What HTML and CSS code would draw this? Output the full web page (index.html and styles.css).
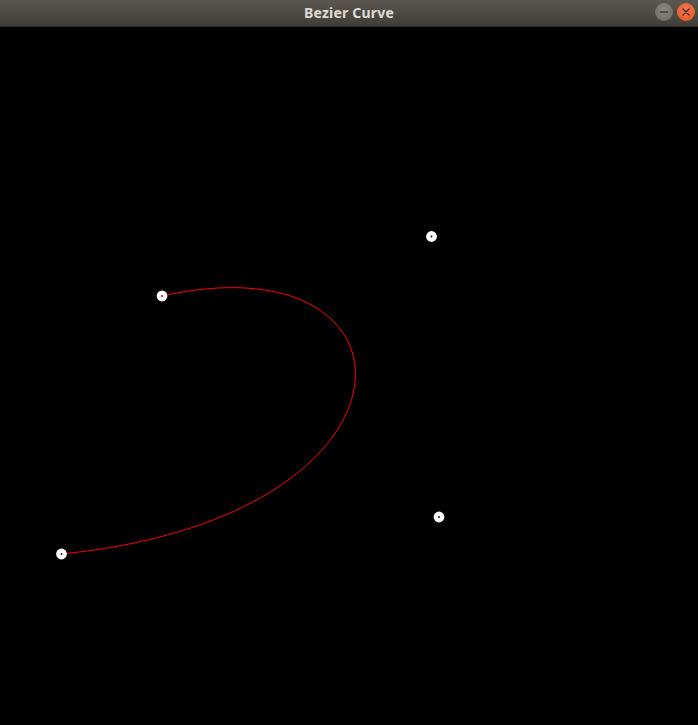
FILE: index.html
```html
<!DOCTYPE html>
<html>
<head>
<meta charset="utf-8">
<title>Bezier Curve</title>
<link rel="stylesheet" href="styles.css">
</head>
<body>
<div class="window">
  <header class="titlebar">
    <span class="title">Bezier Curve</span>
    <div class="controls">
      <span class="btn btn-min"><svg width="18" height="18" viewBox="0 0 18 18"><line x1="5" y1="9" x2="13" y2="9" stroke="#3a3833" stroke-width="1.4"/></svg></span>
      <span class="btn btn-close"><svg width="18" height="18" viewBox="0 0 18 18"><path d="M6 6 L12 12 M12 6 L6 12" stroke="#3a2218" stroke-width="1.3" stroke-linecap="round"/></svg></span>
    </div>
  </header>
  <main class="canvas">
    <svg class="plot" width="698" height="698" viewBox="0 27 698 698">
      <path d="M162 296 C431 236 439 517 61 554" fill="none" stroke="#ff0000" stroke-width="1"/>
      <g fill="#ffffff">
        <circle cx="162" cy="296" r="5.4"/>
        <circle cx="431.5" cy="236.5" r="5.4"/>
        <circle cx="439" cy="517" r="5.4"/>
        <circle cx="61.5" cy="554" r="5.4"/>
      </g>
      <circle cx="162" cy="296" r="1" fill="#ff0000"/>
      <g fill="#000000">
        <circle cx="431.5" cy="236.5" r="0.9"/>
        <circle cx="439" cy="517" r="0.9"/>
        <circle cx="61.5" cy="554" r="0.9"/>
      </g>
    </svg>
  </main>
</div>
</body>
</html>
```
FILE: styles.css
```css
html, body {
  margin: 0;
  padding: 0;
  background: #000;
}
.window {
  width: 698px;
  height: 725px;
  display: flex;
  flex-direction: column;
  overflow: hidden;
}
.titlebar {
  height: 27px;
  flex: none;
  background: linear-gradient(#5b5750, #403e39);
  display: flex;
  align-items: center;
  justify-content: center;
  position: relative;
  box-sizing: border-box;
  border-bottom: 1px solid #2c2b28;
}
.title {
  font-family: "Noto Sans", "DejaVu Sans", sans-serif;
  font-weight: bold;
  font-size: 14px;
  letter-spacing: 0.2px;
  color: #dfdbd2;
  margin-top: -1px;
}
.controls {
  position: absolute;
  right: 3px;
  top: 3px;
  display: flex;
  gap: 4px;
}
.btn {
  width: 18px;
  height: 18px;
  border-radius: 50%;
  display: block;
}
.btn svg { display: block; }
.btn-min {
  background: radial-gradient(circle at 50% 40%, #8a877f, #6b6862);
}
.btn-close {
  background: radial-gradient(circle at 50% 40%, #f47a4e, #e4521e);
}
.canvas {
  flex: 1;
  background: #000;
}
.plot { display: block; }
```
